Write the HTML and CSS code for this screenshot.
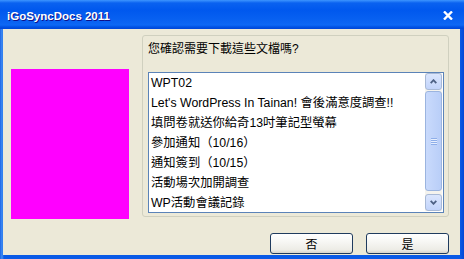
FILE: index.html
```html
<!DOCTYPE html>
<html lang="zh-Hant">
<head>
    <meta charset="UTF-8">
    <title>iGoSyncDocs 2011</title>
    <link rel="stylesheet" href="styles.css">
</head>
<body>

    <div class="window">
        <div class="titlebar">
            <span class="title">iGoSyncDocs 2011</span>
            <svg class="close" width="10" height="9" viewBox="0 0 10 9">
                <path d="M1 0.5 L9 8.5 M9 0.5 L1 8.5" stroke="#fff" stroke-width="2.4" fill="none"/>
            </svg>
        </div>

        <div class="dialog">
            <div class="main">
                <div class="preview"></div>

                <div class="group">
                    <p class="prompt">您確認需要下載這些文檔嗎?</p>
                    <div class="listbox">
                        <ul class="items">
                            <li>WPT02</li>
                            <li>Let's WordPress In Tainan! 會後滿意度調查!!</li>
                            <li>填問卷就送你給奇13吋筆記型螢幕</li>
                            <li>參加通知（10/16）</li>
                            <li>通知簽到（10/15）</li>
                            <li>活動場次加開調查</li>
                            <li>WP活動會議記錄</li>
                        </ul>
                        <div class="scrollbar">
                            <div class="sb-btn">
                                <svg width="7" height="5" viewBox="0 0 7 5"><path d="M0.7 4.2 L3.5 1.2 L6.3 4.2" stroke="#4d6185" stroke-width="1.8" fill="none"/></svg>
                            </div>
                            <div class="sb-thumb"><span class="grip"></span></div>
                            <div class="sb-btn">
                                <svg width="7" height="5" viewBox="0 0 7 5"><path d="M0.7 0.8 L3.5 3.8 L6.3 0.8" stroke="#4d6185" stroke-width="1.8" fill="none"/></svg>
                            </div>
                        </div>
                    </div>
                </div>
            </div>

            <div class="actions">
                <button type="button">否</button>
                <button type="button">是</button>
            </div>
        </div>
    </div>

</body>
</html>
```

FILE: styles.css
```css
html, body {
    margin: 0;
    padding: 0;
}
body {
    width: 464px;
    height: 259px;
    overflow: hidden;
    font-family: "Liberation Sans", "Noto Sans CJK TC", sans-serif;
    font-size: 12px;
    color: #000;
}
.window {
    width: 464px;
    height: 259px;
    display: flex;
    flex-direction: column;
    background: linear-gradient(90deg, #1d63e6 0, #3f8df3 2px, #0a5ae6 4px, #0a5ae6 calc(100% - 4px), #0446d4 100%);
}
.titlebar {
    height: 29px;
    flex: none;
    display: flex;
    align-items: center;
    justify-content: space-between;
    padding: 0 11px 0 7px;
    background: linear-gradient(180deg, #3d95ff 0, #0a62f0 3px, #0058ee 10px, #0a63f2 22px, #0d68f5 25px, #0052e4 27px, #0045d8 29px);
}
.title {
    color: #fff;
    font-weight: bold;
    font-size: 11.5px;
    margin-top: 2px;
    text-shadow: 1px 1px #0f1089;
}
.close {
    display: block;
    margin-top: 1px;
}
.dialog {
    flex: 1;
    margin: 0 4px 4px 3px;
    background: #ece9d8;
    display: flex;
    flex-direction: column;
}
.main {
    display: flex;
    align-items: flex-start;
    gap: 13px;
    padding: 6px 11px 0 8px;
}
.preview {
    flex: none;
    width: 118px;
    height: 150px;
    margin-top: 34px;
    background: #ff00ff;
}
.group {
    flex: 1;
    height: 182px;
    box-sizing: border-box;
    border: 1px solid #d0d0bf;
    border-radius: 3px;
    padding: 5px 4px 0 5px;
}
.prompt {
    margin: 0 0 15px;
    line-height: 16px;
    font-size: 12px;
}
.listbox {
    height: 141px;
    box-sizing: border-box;
    border: 1px solid #5b83b8;
    background: #fff;
    display: flex;
}
.items {
    flex: 1;
    list-style: none;
    margin: 0;
    padding: 0 0 0 2px;
    overflow: hidden;
    white-space: nowrap;
}
.items li {
    line-height: 20px;
    font-size: 12.3px;
}
.scrollbar {
    flex: none;
    width: 17px;
    margin: 0 1px 1px 0;
    display: flex;
    flex-direction: column;
    background: #f4f3ee;
}
.sb-btn {
    height: 17px;
    flex: none;
    box-sizing: border-box;
    border: 1px solid #a8b9d6;
    border-radius: 3px;
    background: linear-gradient(180deg, #dbe6fd, #c2d4fb);
    display: flex;
    align-items: center;
    justify-content: center;
}
.sb-thumb {
    flex: 1;
    margin: 1px 0 3px;
    box-sizing: border-box;
    border: 1px solid #9bb4df;
    border-radius: 3px;
    background: linear-gradient(90deg, #c9dafc, #b9cef8);
    display: flex;
    align-items: center;
    justify-content: center;
}
.grip {
    width: 6px;
    height: 7px;
    background: repeating-linear-gradient(180deg, #8eaee9 0, #8eaee9 1px, #e6eefd 1px, #e6eefd 2px);
}
.actions {
    display: flex;
    justify-content: flex-end;
    gap: 13px;
    margin-top: 14px;
    padding-right: 11px;
}
.actions button {
    width: 83px;
    height: 21px;
    padding: 0;
    border: 1px solid #1f3b5e;
    border-radius: 3px;
    background: linear-gradient(180deg, #ffffff 0, #f7f7f4 40%, #ecebe5 85%, #d8d4ca 100%);
    font-family: "Noto Sans CJK TC", sans-serif;
    font-size: 12px;
    color: #000;
}
```
